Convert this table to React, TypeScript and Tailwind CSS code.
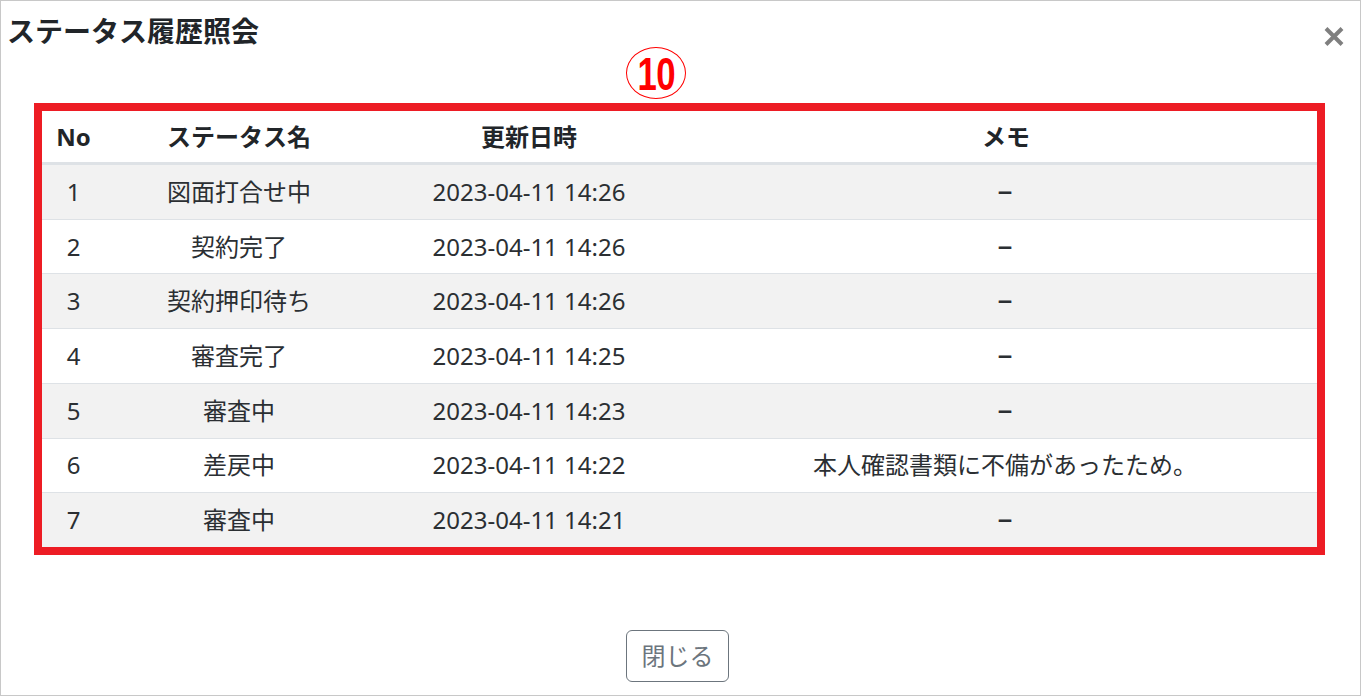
const rows: [string, string, string, string][] = [
  ["1", "図面打合せ中", "2023-04-11 14:26", "–"],
  ["2", "契約完了", "2023-04-11 14:26", "–"],
  ["3", "契約押印待ち", "2023-04-11 14:26", "–"],
  ["4", "審査完了", "2023-04-11 14:25", "–"],
  ["5", "審査中", "2023-04-11 14:23", "–"],
  ["6", "差戻中", "2023-04-11 14:22", "本人確認書類に不備があったため。"],
  ["7", "審査中", "2023-04-11 14:21", "–"],
];

export default function App() {
  return (
    <div className="w-[1361px] h-[696px] border border-[#c8c8c8] bg-white flex flex-col text-[#212529] font-['Noto_Sans','Noto_Sans_CJK_JP',sans-serif]">
      <div className="h-[46px] flex justify-between pl-[6px] pr-[16px]">
        <h1 className="mt-[12px] text-[28px] leading-[36px] font-bold">ステータス履歴照会</h1>
        <svg className="mt-[26px]" width="20" height="19" viewBox="0 0 20 19">
          <path d="M2 1.5 L18 17.5 M18 1.5 L2 17.5" stroke="#7f7f7f" strokeWidth="4" fill="none" />
        </svg>
      </div>
      <div className="h-[56px] pl-[625px]">
        <div className="w-[60px] h-[52px] rounded-[50%] border border-[#ff0000] flex items-center justify-center">
          <span className="text-[47px] leading-none font-bold text-[#ff0000] scale-x-[0.74] font-['Liberation_Sans',sans-serif] tracking-[-1px]">10</span>
        </div>
      </div>
      <div className="ml-[33px] w-[1291px] border-[8px] border-[#ed1c24]">
        <div className="h-[53px] grid grid-cols-[63px_268px_312px_1fr] items-center text-center font-bold text-[24px] border-b-2 border-[#dee2e6]">
          <div>No</div>
          <div>ステータス名</div>
          <div>更新日時</div>
          <div className="pl-[10px]">メモ</div>
        </div>
        <div className="h-[383px] grid grid-rows-[repeat(7,1fr)]">
          {rows.map((r, i) => (
            <div
              key={i}
              className={`grid grid-cols-[63px_268px_312px_1fr] items-center text-center text-[24px] text-[#2b2f33] border-t border-[#dee2e6] ${i % 2 === 0 ? "bg-[#f2f2f2]" : "bg-white"}`}
            >
              <div>{r[0]}</div>
              <div>{r[1]}</div>
              <div>{r[2]}</div>
              <div className="pl-[8px]">
                {r[3] === "–" ? <span className="text-[30px] leading-[24px]">–</span> : r[3]}
              </div>
            </div>
          ))}
        </div>
      </div>
      <div className="pl-[625px] pt-[75px]">
        <button className="w-[103px] h-[52px] border border-[#6c757d] rounded-[6px] text-[24px] text-[#6c757d] bg-white">閉じる</button>
      </div>
    </div>
  );
}
